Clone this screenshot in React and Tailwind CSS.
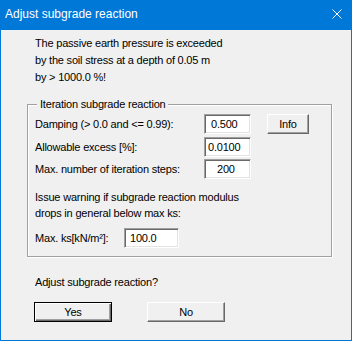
const font = { fontFamily: '"Liberation Sans", Arial, sans-serif' };

const TextBox = ({ value, width, pad }) => (
  <div
    className={`h-[20px] ${width} ${pad} flex items-center bg-white border border-t-[#a0a0a0] border-l-[#a0a0a0] border-b-white border-r-white shadow-[inset_1px_1px_0_#696969,inset_-1px_-1px_0_#e3e3e3] text-[11px] tracking-[-0.2px] text-black`}
  >
    {value}
  </div>
);

const Button = ({ label, className = "", isDefault = false }) => (
  <div
    className={`h-[20px] flex items-center justify-center bg-[#f0f0f0] text-[11px] tracking-[-0.2px] text-black ${
      isDefault
        ? "border border-black shadow-[inset_1px_1px_0_#fff,inset_-1px_-1px_0_#696969,inset_-2px_-2px_0_#a0a0a0]"
        : "border border-t-white border-l-white border-b-[#696969] border-r-[#696969] shadow-[inset_-1px_-1px_0_#a0a0a0]"
    } ${className}`}
  >
    {label}
  </div>
);

export default function App() {
  return (
    <div style={font} className="w-[352px] h-[341px] bg-[#0078d7] flex flex-col px-[1px] pb-[1px]">
      {/* title bar */}
      <div className="h-[30px] flex items-center justify-between pl-[4px] pr-[9px] text-white text-[12px]">
        <span className="-mt-[2px]">Adjust subgrade reaction</span>
        <svg width="10" height="10" viewBox="0 0 10 10" className="-mt-[3px]">
          <path d="M0.5 0.5L9.5 9.5M9.5 0.5L0.5 9.5" stroke="#fff" strokeWidth="1" />
        </svg>
      </div>

      {/* body */}
      <div className="flex-1 bg-[#f0f0f0] flex flex-col text-[11px] tracking-[-0.2px] text-black">
        <div className="mt-[5px] ml-[34px] leading-[17px]">
          <div>The passive earth pressure is exceeded</div>
          <div>by the soil stress at a depth of 0.05 m</div>
          <div>by &gt; 1000.0 %!</div>
        </div>

        {/* group box */}
        <div className="relative mt-[18px] ml-[26px] w-[305px] h-[153px] border border-[#a0a0a0] shadow-[1px_1px_0_#fff,inset_1px_1px_0_#fff] pl-[7px] pt-[9px]">
          <div className="absolute -top-[9px] left-[9px] px-[3px] bg-[#f0f0f0] leading-[17px]">
            Iteration subgrade reaction
          </div>

          <div className="flex items-center h-[20px]">
            <div className="w-[169px]">Damping (&gt; 0.0 and &lt;= 0.99):</div>
            <TextBox value="0.500" width="w-[47px]" pad="pl-[6px]" />
            <Button label="Info" className="ml-[16px] w-[42px]" />
          </div>
          <div className="flex items-center h-[20px] mt-[3px]">
            <div className="w-[169px]">Allowable excess [%]:</div>
            <TextBox value="0.0100" width="w-[47px]" pad="pl-[3px]" />
          </div>
          <div className="flex items-center h-[20px] mt-[2px]">
            <div className="w-[169px]">Max. number of iteration steps:</div>
            <TextBox value="200" width="w-[47px]" pad="pl-[12px]" />
          </div>

          <div className="mt-[10px] leading-[16px]">
            <div>Issue warning if subgrade reaction modulus</div>
            <div>drops in general below max ks:</div>
          </div>

          <div className="flex items-center h-[20px] mt-[7px]">
            <div className="w-[89px]">Max. ks[kN/m²]:</div>
            <TextBox value="100.0" width="w-[55px]" pad="pl-[5px]" />
          </div>
        </div>

        <div className="mt-[17px] ml-[34px] leading-[17px]">Adjust subgrade reaction?</div>

        <div className="flex mt-[11px] ml-[33px] gap-[35px]">
          <Button label="Yes" isDefault className="w-[78px]" />
          <Button label="No" className="w-[78px]" />
        </div>
      </div>
    </div>
  );
}
